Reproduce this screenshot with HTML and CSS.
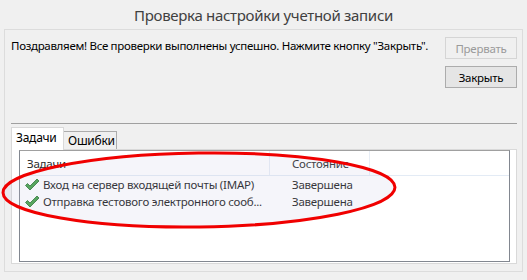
FILE: index.html
```html
<!DOCTYPE html>
<html lang="ru">
<head>
<meta charset="utf-8">
<link rel="stylesheet" href="styles.css">
</head>
<body>
<div class="window">
  <div class="title">Проверка настройки учетной записи</div>
  <div class="panel">
    <div class="top">
      <p class="msg">Поздравляем! Все проверки выполнены успешно. Нажмите кнопку "Закрыть".</p>
      <div class="buttons">
        <button class="btn" disabled>Прервать</button>
        <button class="btn">Закрыть</button>
      </div>
    </div>
    <div class="sep"></div>
    <div class="tabs">
      <div class="tab active">Задачи</div>
      <div class="tab">Ошибки</div>
    </div>
    <div class="tabpage">
      <div class="list">
        <div class="head">
          <div class="col c1">Задачи</div>
          <div class="col c2">Состояние</div>
          <div class="col c3"></div>
        </div>
        <div class="row">
          <div class="cell c1">
            <svg class="check" width="16" height="14" viewBox="0 0 16 14"><path d="M1.5 7.5 L3.5 5.5 L6 8 L13 1 L15 3 L6 12 Z" fill="#43a047" stroke="#1b6b1f" stroke-width="0.8" stroke-linejoin="round"/></svg>
            <span>Вход на сервер входящей почты (IMAP)</span>
          </div>
          <div class="cell c2">Завершена</div>
        </div>
        <div class="row">
          <div class="cell c1">
            <svg class="check" width="16" height="14" viewBox="0 0 16 14"><path d="M1.5 7.5 L3.5 5.5 L6 8 L13 1 L15 3 L6 12 Z" fill="#43a047" stroke="#1b6b1f" stroke-width="0.8" stroke-linejoin="round"/></svg>
            <span>Отправка тестового электронного сооб...</span>
          </div>
          <div class="cell c2">Завершена</div>
        </div>
      </div>
    </div>
  </div>
  <svg class="mark" width="527" height="280" viewBox="0 0 527 280">
    <ellipse cx="199" cy="190" rx="196" ry="37" transform="rotate(-0.8 199 190)" fill="rgba(190,190,225,0.16)" stroke="#f00000" stroke-width="3"/>
  </svg>
</div>
</body>
</html>
```

FILE: styles.css
```css
* { box-sizing: border-box; }
html, body { margin: 0; padding: 0; }
body {
  background: #f0f0f0;
  font-family: "Noto Sans", "Open Sans", sans-serif;
  font-size: 11.5px;
  letter-spacing: -0.25px;
  color: #000;
}
.window {
  position: relative;
  width: 527px;
  height: 280px;
  overflow: hidden;
}
.title {
  height: 29px;
  line-height: 30px;
  text-align: center;
  font-size: 15px;
  letter-spacing: -0.3px;
  color: #404040;
}
.panel {
  margin: 0 4px;
  height: 243px;
  border: 1px solid #dcdcdc;
  display: flex;
  flex-direction: column;
  padding: 0 5px 7px 6px;
}
.top {
  display: flex;
  justify-content: space-between;
  height: 93px;
}
.msg {
  margin: 0;
  padding-top: 8px;
  line-height: 16px;
  white-space: nowrap;
  letter-spacing: -0.3px;
}
.buttons {
  display: flex;
  flex-direction: column;
  gap: 7px;
  padding-top: 7px;
}
.btn {
  width: 72px;
  height: 22px;
  font: inherit;
  letter-spacing: inherit;
  background: #e5e5e5;
  border: 1px solid #acacac;
  color: #000;
  padding: 0;
}
.btn:disabled {
  background: #f0f0f0;
  border-color: #d5d5d5;
  color: #9a9a9a;
}
.sep {
  height: 1px;
  background: #a0a0a0;
}
.tabs {
  display: flex;
  align-items: flex-end;
  height: 25px;
  position: relative;
  z-index: 1;
}
.tab {
  height: 18px;
  width: 53px;
  padding: 0 4px;
  border: 1px solid #acacac;
  border-bottom: none;
  border-left: none;
  background: #f0f0f0;
  line-height: 17px;
  font-size: 12px;
}
.tab.active {
  height: 23px;
  background: #fff;
  border-color: #d9d9d9;
  border-left: 1px solid #d9d9d9;
  line-height: 20px;
  margin-bottom: -1px;
}
.tabpage {
  flex: 1;
  background: #fff;
  border: 1px solid #d9d9d9;
  padding: 0 6px 1px 7px;
  display: flex;
}
.list {
  flex: 1;
  border: 1px solid #828790;
  border-top-color: #a0a0a0;
  background: #fff;
}
.head {
  display: flex;
  height: 25px;
  border-bottom: 1px solid #e3ebf5;
}
.col {
  line-height: 26px;
  color: #2a2a2a;
  border-right: 1px solid #e8eef6;
}
.c1 { width: 250px; padding-left: 7px; flex-shrink: 0; }
.c2 { width: 100px; padding-left: 22px; flex-shrink: 0; }
.c3 { flex: 1; border-right: none; }
.row {
  display: flex;
  height: 17px;
  align-items: center;
}
.cell {
  display: flex;
  align-items: center;
  white-space: nowrap;
  color: #1a1a1a;
}
.row .c1 { padding-left: 4px; }
.check { margin-right: 3px; flex-shrink: 0; }
.mark {
  position: absolute;
  left: 0;
  top: 0;
  pointer-events: none;
}
```
